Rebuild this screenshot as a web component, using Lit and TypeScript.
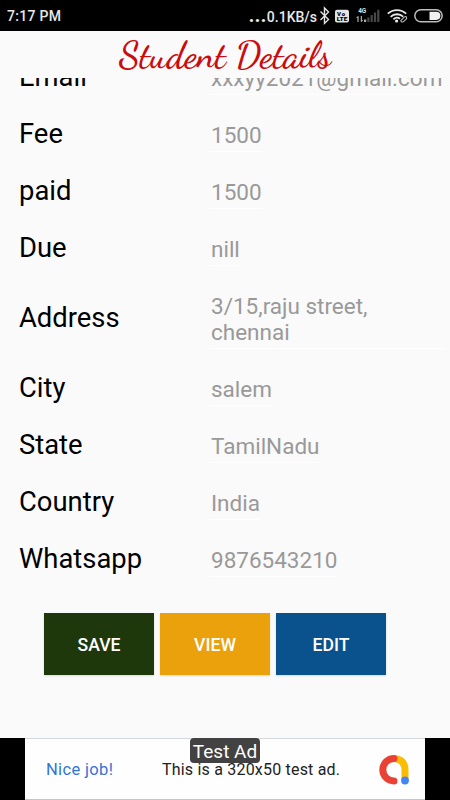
import { LitElement, html, css } from "lit";
import { customElement } from "lit/decorators.js";

interface Field {
  label: string;
  value: string;
  multiline?: boolean;
}

const FIELDS: Field[] = [
  { label: "Email", value: "xxxyy2021@gmail.com" },
  { label: "Fee", value: "1500" },
  { label: "paid", value: "1500" },
  { label: "Due", value: "nill" },
  { label: "Address", value: "3/15,raju street, chennai", multiline: true },
  { label: "City", value: "salem" },
  { label: "State", value: "TamilNadu" },
  { label: "Country", value: "India" },
  { label: "Whatsapp", value: "9876543210" },
];

@customElement("status-bar")
class StatusBar extends LitElement {
  static styles = css`
    :host {
      display: flex;
      align-items: center;
      justify-content: space-between;
      height: 31px;
      padding: 1px 7px 0 7px;
      box-sizing: border-box;
      background: #000;
      color: #e8e8e8;
      font: 500 14px/20px Roboto, sans-serif;
    }
    .time { letter-spacing: 0.3px; }
    .right { display: flex; align-items: center; }
    .speed { white-space: nowrap; }
    .dots { letter-spacing: 0.6px; font-weight: 900; font-size: 18px; }
    svg { display: block; }
    .small { font: 700 6.5px Roboto, sans-serif; fill: #ddd; }
    .lte { font: 900 6px Roboto, sans-serif; fill: #000; }
  `;
  render() {
    return html`
      <span class="time">7:17 PM</span>
      <div class="right">
        <span class="speed"><span class="dots">...</span>0.1KB/s</span>
        <svg width="126" height="22" viewBox="317 5 126 22">
          <path d="M320.5 11.5l8 8-4 4V8l4 4-8 8" transform="translate(0 -.1)" fill="none" stroke="#e4e4e4" stroke-width="1.4"/>
          <rect x="335" y="9.8" width="14" height="12.6" rx="2" fill="#e4e4e4"/>
          <text class="lte" x="337" y="15.5" textLength="8">Vo</text>
          <text class="lte" x="336.7" y="21.2" textLength="10.8" lengthAdjust="spacingAndGlyphs">LTE</text>
          <text class="small" x="358.3" y="13.2" textLength="8">4G</text>
          <path d="M358 22v-5.5m-1.4 1.6 1.4-1.6M361.3 16v5.5m1.4-1.6-1.4 1.6" fill="none" stroke="#d0d0d0" stroke-width="1"/>
          <path d="M364 19.5h2.2V22H364z" fill="#aaa"/>
          <path d="M367.3 17.5h2.2V22h-2.2zM370.6 15h2.2v7h-2.2zM373.9 12.5h2.2V22h-2.2zM377.2 9.8h2.2V22h-2.2z" fill="#484848"/>
          <g fill="none" stroke="#e8e8e8" stroke-width="1.8">
            <path d="M387.8 13.7a13.5 13.5 0 0 1 18.4 0"/>
            <path d="M390.6 16.8a9.3 9.3 0 0 1 12.6-.2"/>
            <path d="M393.4 19.3a5.2 5.2 0 0 1 6.6-.6"/>
          </g>
          <circle cx="396.6" cy="21" r="1.6" fill="#e8e8e8"/>
          <path d="M400.8 20.7l3.3-3.6q2-1.4 2.5.2t-1 2.3l-2.3 2.2q-2 .8-2.5-1.1z" fill="#000" stroke="#bbb" stroke-width="1.1"/>
          <rect x="414.8" y="9.8" width="27.4" height="12" rx="6" fill="#000" stroke="#bdbdbd" stroke-width="1.5"/>
          <path d="M429.5 11.7h6.8a4.1 4.1 0 0 1 0 8.2h-6.8z" fill="#f2f2f2"/>
        </svg>
      </div>
    `;
  }
}

@customElement("detail-row")
class DetailRow extends LitElement {
  static properties = { field: { attribute: false } };
  declare field: Field;
  static styles = css`
    :host {
      display: grid;
      grid-template-columns: 190px 1fr;
      align-items: center;
      height: 57px;
      padding: 0 4px 0 19px;
      font-family: Roboto, sans-serif;
    }
    :host([tall]) { height: 83px; }
    .label { font-size: 27.4px; line-height: 32px; color: #000; }
    .value {
      justify-self: start;
      margin-top: 3px;
      padding: 4px 0 3px 2px;
      border-bottom: 1px solid #fff;
      font-size: 22.5px;
      line-height: 26px;
      color: #999;
      white-space: nowrap;
    }
    .multiline {
      justify-self: stretch;
      padding-right: 40px;
      white-space: normal;
    }
  `;
  render() {
    const { label, value, multiline } = this.field;
    return html`
      <span class="label">${label}</span>
      <span class="value ${multiline ? "multiline" : ""}">${value}</span>
    `;
  }
}

@customElement("ad-banner")
class AdBanner extends LitElement {
  static styles = css`
    :host {
      display: flex;
      justify-content: center;
      height: 62px;
      background: #000;
    }
    .banner {
      position: relative;
      display: grid;
      grid-template-columns: 116px 1fr 32px;
      align-items: center;
      width: 400px;
      height: 62px;
      padding: 1px 15px 0 21px;
      box-sizing: border-box;
      border-top: 1px solid #d5d7da;
      border-bottom: 1px solid #c4c7ca;
      background: #fefefe;
      font: 16px/20px Roboto, sans-serif;
      color: #222;
    }
    .praise { color: #3474d4; font-size: 16.5px; letter-spacing: 0.35px; }
    .copy { white-space: nowrap; letter-spacing: 0.2px; }
    .tag {
      position: absolute;
      left: 165px;
      top: -1px;
      width: 70px;
      height: 25px;
      border-radius: 4px;
      background: #424242;
      color: #fff;
      font-size: 19px;
      line-height: 27px;
      text-align: center;
      white-space: nowrap;
    }
    svg { display: block; }
  `;
  render() {
    return html`
      <div class="banner">
        <span class="praise">Nice job!</span>
        <span class="copy">This is a 320x50 test ad.</span>
        <svg width="32" height="32" viewBox="0 0 32 32" fill="none" stroke-width="7" stroke-linecap="round">
          <path d="M16.5 4.5Q27 5.5 27 16v10" stroke="#fbbc04" stroke-linecap="butt"/>
          <path d="M16 4.5a11.2 11.2 0 0 0 0 22.4" stroke="#e94235"/>
          <circle cx="27" cy="26.5" r="3.9" fill="#4285f4"/>
        </svg>
        <span class="tag">Test Ad</span>
      </div>
    `;
  }
}

@customElement("app-root")
class AppRoot extends LitElement {
  static styles = css`
    :host {
      display: flex;
      flex-direction: column;
      width: 450px;
      height: 800px;
      overflow: hidden;
      background: #fafafa;
    }
    .title {
      height: 47px;
      margin: 0;
      font: 600 37.3px/49px "Dancing Script", cursive;
      color: #c90c0f;
      text-align: center;
      white-space: nowrap;
    }
    .scroll { flex: 1; min-height: 0; overflow: hidden; }
    .form { margin-top: -30px; }
    .actions { display: flex; gap: 6px; padding: 26px 0 0 44px; }
    .btn {
      width: 110px;
      height: 62px;
      padding: 2px 0 0;
      border: 0;
      color: #fff;
      font: 500 17.6px/20px Roboto, sans-serif;
      box-shadow: 0 1px 2px #0002;
    }
    .save { background: #1f380b; }
    .view { background: #eba10c; }
    .edit { background: #0a528d; }
  `;
  render() {
    return html`
      <status-bar></status-bar>
      <h1 class="title">Student Details</h1>
      <div class="scroll">
        <div class="form">
          ${FIELDS.map((f) => html`<detail-row .field=${f} ?tall=${!!f.multiline}></detail-row>`)}
        </div>
        <div class="actions">
          <button class="btn save">SAVE</button>
          <button class="btn view">VIEW</button>
          <button class="btn edit">EDIT</button>
        </div>
      </div>
      <ad-banner></ad-banner>
    `;
  }
}
